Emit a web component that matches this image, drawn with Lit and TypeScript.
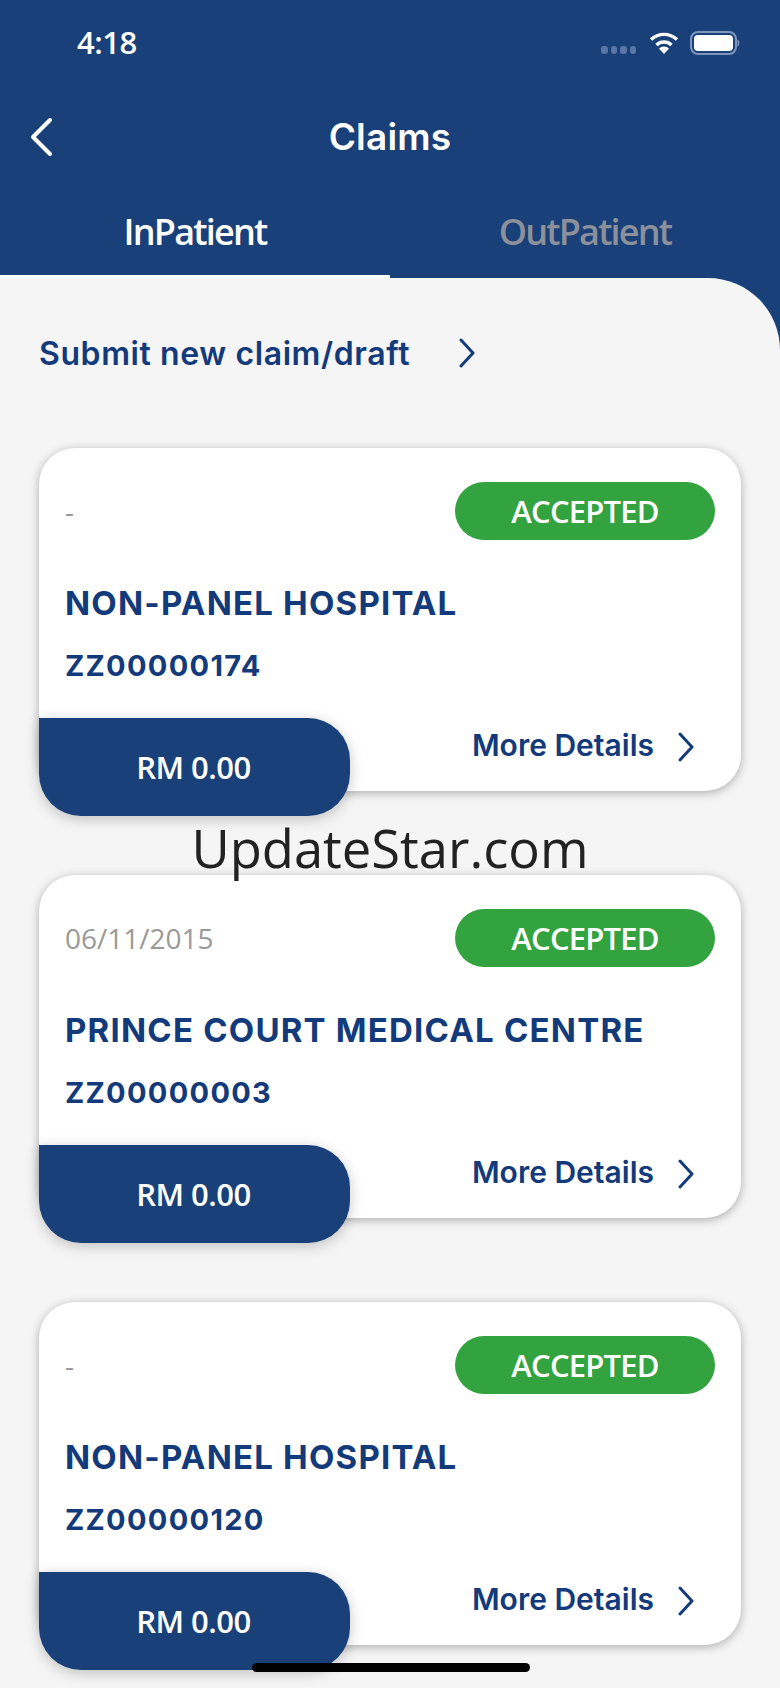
import { LitElement, html, css, svg } from 'lit';
import { customElement } from 'lit/decorators.js';

const chevron = svg`<path d="M2 2l12 13L2 28" fill="none" stroke="currentColor" stroke-width="3" stroke-linecap="round" stroke-linejoin="round"/>`;

const claims = [
    { date: '-', name: 'NON-PANEL HOSPITAL', code: 'ZZ00000174' },
    { date: '06/11/2015', name: 'PRINCE COURT MEDICAL CENTRE', code: 'ZZ00000003' },
    { date: '-', name: 'NON-PANEL HOSPITAL', code: 'ZZ00000120' },
];

@customElement('app-root')
export class AppRoot extends LitElement {
    static styles = css`
        :host {
            display: block;
            position: relative;
            width: 780px;
            height: 1688px;
            overflow: hidden;
            background: #1a4079;
            font-family: "Open Sans", "Liberation Sans", sans-serif;
        }
        .status {
            height: 86px;
            display: flex;
            align-items: center;
            justify-content: space-between;
            padding: 0 40px 0 77px;
            box-sizing: border-box;
            color: #fff;
        }
        .time {
            font-size: 31px;
            font-weight: 600;
            letter-spacing: -0.5px;
            margin-top: -2px;
        }
        .status-icons {
            display: flex;
            align-items: center;
            gap: 11px;
        }
        .dots {
            display: flex;
            gap: 3px;
            margin-top: 14px;
            margin-right: 2px;
        }
        .dots span {
            width: 6.500px;
            height: 8px;
            border-radius: 3px;
            background: #5876a6;
        }
        .nav {
            height: 100px;
            display: flex;
            align-items: center;
            justify-content: center;
            position: relative;
            color: #fff;
        }
        .nav h1 {
            margin: 0;
            font-family: "Inter", sans-serif;
            font-size: 37px;
            font-weight: 600;
            letter-spacing: 0.2px;
        }
        .back {
            position: absolute;
            left: 29px;
            top: 31px;
        }
        .tabs {
            display: flex;
            height: 92px;
        }
        .tab {
            flex: 1;
            display: flex;
            justify-content: center;
            padding-top: 21px;
            font-size: 36px;
            line-height: 49px;
            font-weight: 600;
            letter-spacing: -1.8px;
            color: #8c909a;
            box-sizing: border-box;
        }
        .tab.active {
            color: #fff;
            border-bottom: 3px solid #fff;
        }
        .sheet {
            background: #f5f5f5;
            border-top-right-radius: 72px;
            height: 1410px;
            padding: 0 39px;
            box-sizing: border-box;
            color: #133a7a;
        }
        .submit {
            display: flex;
            align-items: center;
            gap: 49px;
            height: 170px;
            padding-bottom: 20px;
            font-family: "Inter", sans-serif;
            font-size: 32px;
            font-weight: 600;
            letter-spacing: 0.6px;
            box-sizing: border-box;
        }
        .card {
            position: relative;
            height: 343px;
            margin-bottom: 84px;
            background: #fff;
            border-radius: 36px;
            box-shadow: 0 2px 10px rgba(0, 0, 0, 0.3);
            padding: 34px 26px 0 26px;
            box-sizing: border-box;
        }
        .top {
            display: flex;
            justify-content: space-between;
            align-items: center;
        }
        .date {
            font-size: 28px;
            line-height: 38px;
            color: #999;
        }
        .badge {
            width: 260px;
            height: 58px;
            border-radius: 29px;
            background: #33a340;
            color: #fff;
            display: flex;
            align-items: center;
            justify-content: center;
            font-size: 31px;
            font-weight: 600;
            letter-spacing: -0.8px;
        }
        .name {
            margin-top: 41px;
            font-family: "Inter", sans-serif;
            font-size: 33px;
            font-weight: 700;
            letter-spacing: 1.2px;
            line-height: 44px;
        }
        .code {
            margin-top: 21px;
            font-family: "Inter", sans-serif;
            font-size: 29px;
            font-weight: 700;
            letter-spacing: 1.3px;
            line-height: 40px;
        }
        .amount {
            position: absolute;
            left: 0;
            top: 270px;
            width: 311px;
            height: 98px;
            padding-right: 2px;
            box-sizing: border-box;
            border-radius: 0 42px 42px 42px;
            background: #1a4079;
            color: #fff;
            display: flex;
            align-items: center;
            justify-content: center;
            font-size: 31px;
            font-weight: 600;
            letter-spacing: -0.5px;
            box-shadow: 0 3px 14px rgba(0, 0, 0, 0.22);
        }
        .more {
            position: absolute;
            right: 47px;
            top: 279px;
            display: flex;
            align-items: center;
            gap: 24px;
            font-family: "Inter", sans-serif;
            font-size: 30px;
            font-weight: 600;
        }
        .more svg {
            margin-top: 4px;
        }
        .watermark {
            position: absolute;
            left: 0;
            right: 0;
            top: 811px;
            text-align: center;
            font-size: 52.5px;
            line-height: 74px;
            color: #222;
        }
        .home {
            position: absolute;
            left: 252px;
            top: 1663px;
            width: 278px;
            height: 9px;
            border-radius: 5px;
            background: #000;
        }
    `;

    renderCard(c: { date: string; name: string; code: string }) {
        return html`
            <div class="card">
                <div class="top">
                    <span class="date">${c.date}</span>
                    <span class="badge">ACCEPTED</span>
                </div>
                <div class="name">${c.name}</div>
                <div class="code">${c.code}</div>
                <div class="amount">RM 0.00</div>
                <div class="more">
                    More Details
                    <svg width="16" height="30" viewBox="0 0 16 30">${chevron}</svg>
                </div>
            </div>
        `;
    }

    render() {
        return html`
            <div class="status">
                <span class="time">4:18</span>
                <div class="status-icons">
                    <div class="dots"><span></span><span></span><span></span><span></span></div>
                    <svg width="30" height="22" viewBox="0 0 30 22" fill="none" stroke="#fff" stroke-width="3.4">
                        <path d="M2 7.5a19 19 0 0 1 26 0" />
                        <path d="M7.500 13a11 11 0 0 1 15 0" />
                        <path d="M15 22l-5-5.500a7 7 0 0 1 10 0z" fill="#fff" stroke="none" />
                    </svg>
                    <svg width="50" height="24" viewBox="0 0 50 24">
                        <rect x="1" y="1" width="45" height="22" rx="7" fill="none" stroke="#7f96bc" stroke-width="2" />
                        <rect x="4" y="4" width="39" height="16" rx="4" fill="#fff" />
                        <path d="M47.500 8.500c2.500 .5 2.500 6.500 0 7z" fill="#7f96bc" />
                    </svg>
                </div>
            </div>
            <div class="nav">
                <svg class="back" width="24" height="40" viewBox="0 0 24 40" fill="none" stroke="#fff" stroke-width="4" stroke-linecap="round" stroke-linejoin="round">
                    <path d="M21 3L4 20l17 17" />
                </svg>
                <h1>Claims</h1>
            </div>
            <div class="tabs">
                <div class="tab active">InPatient</div>
                <div class="tab">OutPatient</div>
            </div>
            <div class="sheet">
                <div class="submit">
                    Submit new claim/draft
                    <svg width="16" height="30" viewBox="0 0 16 30">${chevron}</svg>
                </div>
                ${claims.map((c) => this.renderCard(c))}
            </div>
            <div class="watermark">UpdateStar.com</div>
            <div class="home"></div>
        `;
    }
}
